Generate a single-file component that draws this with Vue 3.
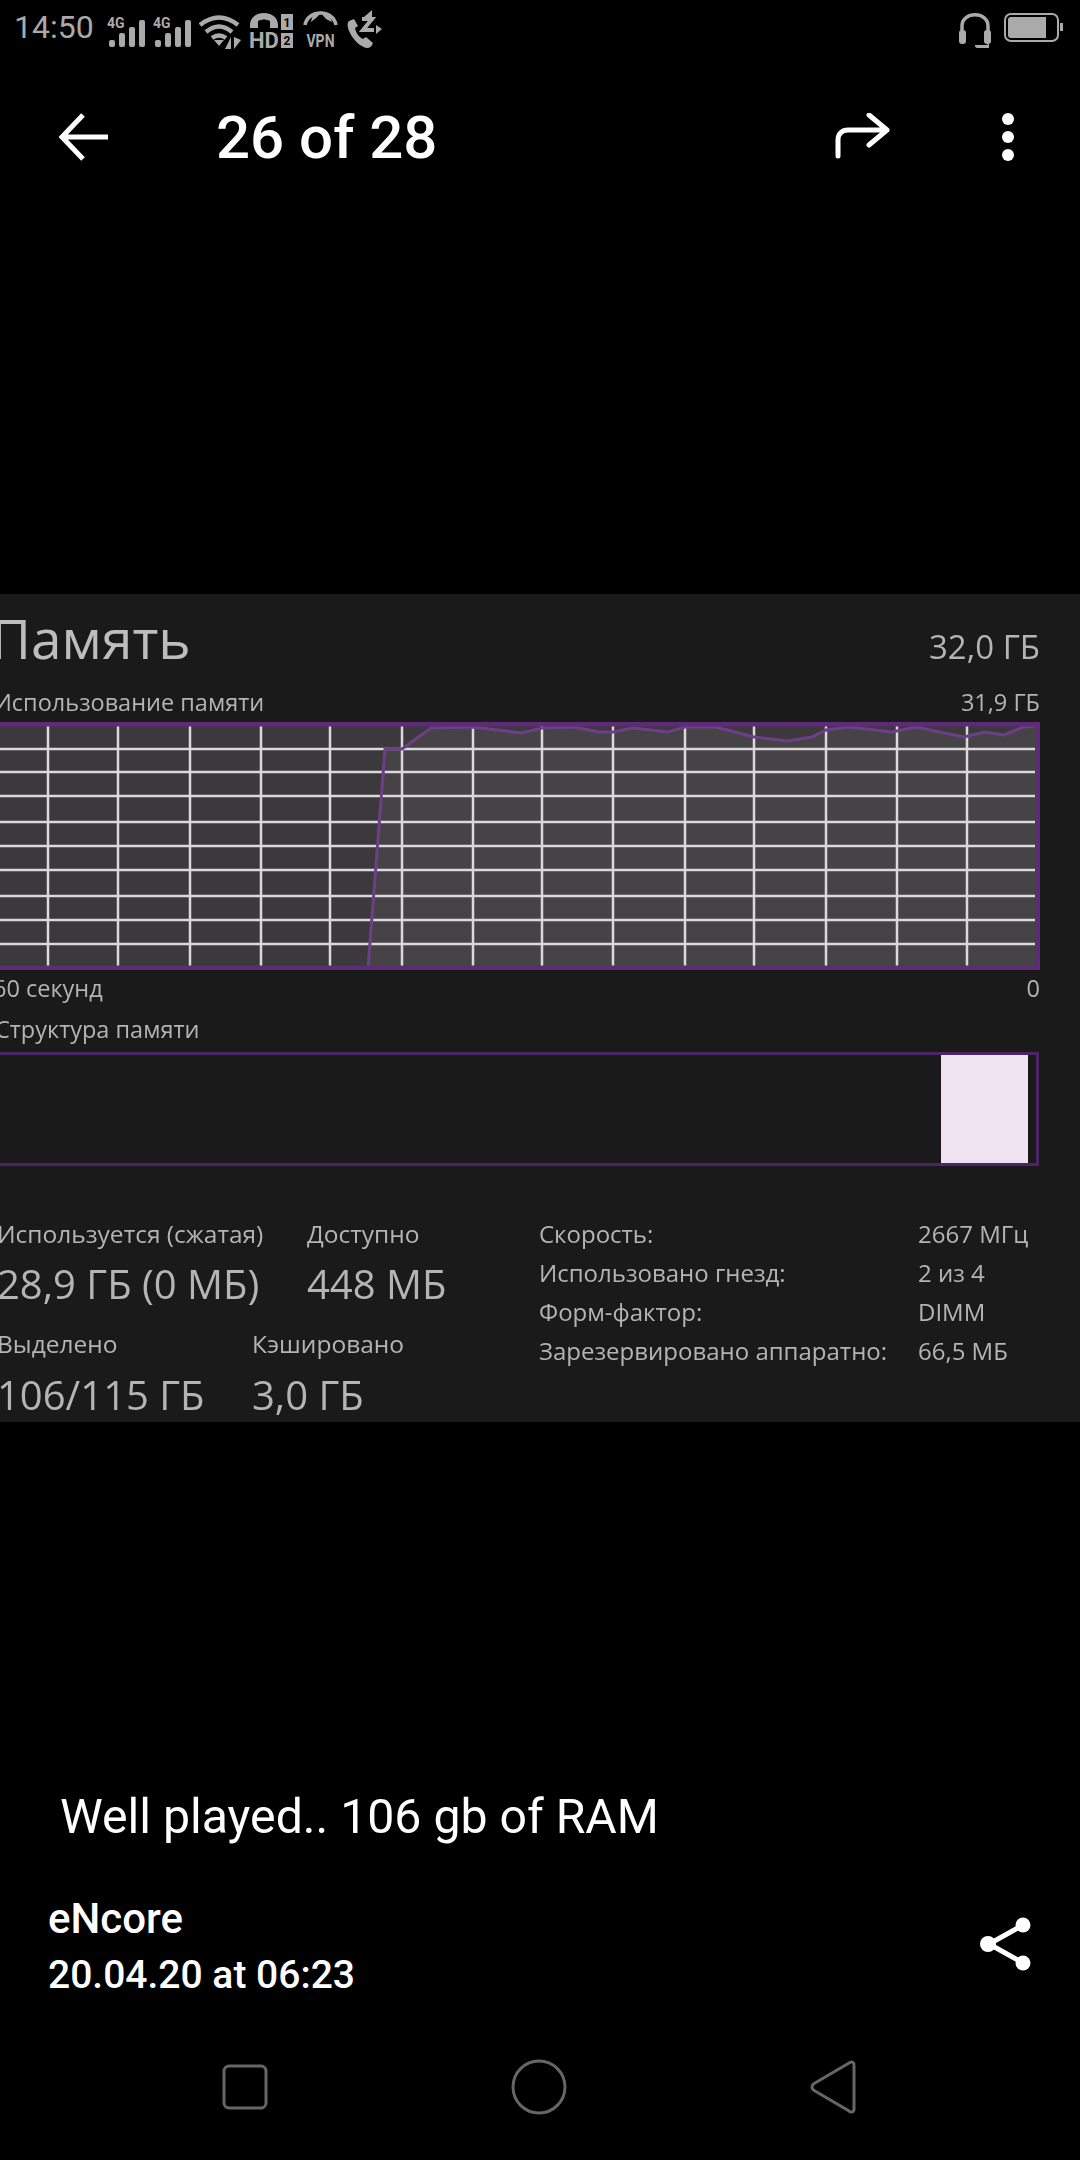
<template>
  <div class="screen">
    <!-- status bar -->
    <header class="status">
      <span class="status__time">14:50</span>
      <svg v-for="n in 2" :key="n" class="status__signal" width="42" height="42" viewBox="0 0 42 42">
        <text x="0" y="21" class="tiny">4G</text>
        <rect x="2" y="33" width="6" height="7" rx="2" />
        <rect x="12" y="26" width="6" height="14" rx="2" />
        <rect x="22" y="20" width="6" height="20" rx="2" />
        <rect x="32" y="13" width="6" height="27" rx="2" />
      </svg>
      <svg width="44" height="42" viewBox="0 0 44 42" class="status__wifi">
        <path d="M1 18 Q20 3 39 18" />
        <path d="M7 25 Q20 14 33 25" />
        <path d="M13 31 Q20 26 27 31" />
        <polygon class="solid" points="15,33 25,33 20,39" />
        <polygon class="solid" points="32,30 32,42 26,42" />
        <polygon class="solid" points="35,30 35,42 42,33" />
      </svg>
      <svg width="46" height="46" viewBox="0 0 46 46" class="status__hd">
        <path class="solid" d="M1 20 C1 4 29 4 29 20 L29 23 L21 23 L21 16 C16 14 14 14 9 16 L9 23 L1 23 Z" />
        <text x="0" y="43" class="hd">HD</text>
        <rect class="solid" x="32" y="9" width="12" height="16" />
        <rect class="solid" x="32" y="28" width="12" height="15" />
        <text x="38" y="22" class="sim">1</text>
        <text x="38" y="40" class="sim">2</text>
      </svg>
      <svg width="36" height="46" viewBox="0 0 36 46" class="status__vpn">
        <path class="solid" d="M8 17 C10 3 26 3 29 17 L23 14 L18 8 L13 13 Z" />
        <path class="thin" d="M2 20 C5 4 30 4 33 20" />
        <text class="vpn" transform="translate(17.5 42) scale(1 1.35)">VPN</text>
      </svg>
      <svg width="38" height="42" viewBox="0 0 38 42" class="status__call">
        <path class="solid" d="M4 14 C2 16 2 20 5 26 C9 34 16 40 22 41 C25 41 27 39 28 36 L21 30 L18 32 C14 30 11 26 10 21 L13 19 L9 12 Z" />
        <path class="zed" d="M17 12 H27 L18 23 H29" />
        <path class="solid" d="M19 10 L27 10 L27 3 Z" />
        <path class="solid" d="M31 18 L37 22 L31 27 Z" />
      </svg>

      <span class="status__spacer"></span>

      <svg width="34" height="42" viewBox="0 0 34 42" class="status__headset">
        <path class="thin" d="M4 25 V19 C4 4 30 4 30 19 V25" />
        <rect class="solid" x="1" y="23" width="7" height="14" rx="3" />
        <rect class="solid" x="26" y="23" width="7" height="14" rx="3" />
        <path class="solid" d="M17 38 H28 C30 38 31 36 31 35 V41 H19 C17 41 17 38 17 38 Z" />
      </svg>
      <div class="battery">
        <div class="battery__fill"></div>
      </div>
      <div class="battery__nub"></div>
    </header>

    <!-- toolbar -->
    <nav class="toolbar">
      <svg class="toolbar__back" width="50" height="50" viewBox="0 0 50 50">
        <path d="M49 25 H4 M24 3 L3 25 L24 47" />
      </svg>
      <span class="toolbar__title">26 of 28</span>
      <span class="toolbar__spacer"></span>
      <svg class="toolbar__forward" width="56" height="48" viewBox="0 0 56 48">
        <path d="M3 43 V27 C3 21 7 17 13 17 H52 M34 2 L52 17 L34 32" />
      </svg>
      <div class="toolbar__dots">
        <i></i><i></i><i></i>
      </div>
    </nav>

    <!-- photographed task manager panel -->
    <section class="shot">
      <div class="shot__row shot__row--head">
        <span class="shot__title">Память</span>
        <span class="shot__total">32,0 ГБ</span>
      </div>
      <div class="shot__row shot__row--label">
        <span>Использование памяти</span>
        <span>31,9 ГБ</span>
      </div>

      <svg class="chart" width="1040" height="248" viewBox="0 0 1040 248">
        <rect x="0" y="0" width="1040" height="248" class="chart__bg" />
        <polygon :points="areaPoints" class="chart__area" />
        <line
          v-for="y in rows"
          :key="'r' + y"
          x1="0"
          x2="1035"
          :y1="y"
          :y2="y"
          class="chart__grid"
        />
        <line
          v-for="x in cols"
          :key="'c' + x"
          :x1="x"
          :x2="x"
          y1="3"
          y2="244"
          class="chart__grid"
        />
        <polyline :points="linePoints" class="chart__line" />
        <path d="M0 2 H1038 V246 H0" class="chart__frame" />
      </svg>

      <div class="shot__row shot__row--axis">
        <span>60 секунд</span>
        <span>0</span>
      </div>
      <div class="shot__row shot__row--struct">
        <span>Структура памяти</span>
      </div>

      <div class="bar">
        <div class="bar__used"></div>
      </div>

      <div class="stats">
        <div class="stats__left">
          <div class="stats__row">
            <div class="stat stat--used">
              <div class="stat__label">Используется (сжатая)</div>
              <div class="stat__value">28,9 ГБ (0 МБ)</div>
            </div>
            <div class="stat">
              <div class="stat__label">Доступно</div>
              <div class="stat__value">448 МБ</div>
            </div>
          </div>
          <div class="stats__row">
            <div class="stat stat--alloc">
              <div class="stat__label">Выделено</div>
              <div class="stat__value">106/115 ГБ</div>
            </div>
            <div class="stat">
              <div class="stat__label">Кэшировано</div>
              <div class="stat__value">3,0 ГБ</div>
            </div>
          </div>
        </div>
        <dl class="specs">
          <template v-for="s in specs" :key="s.name">
            <dt>{{ s.name }}</dt>
            <dd>{{ s.value }}</dd>
          </template>
        </dl>
      </div>
    </section>

    <p class="caption">Well played.. 106 gb of RAM</p>

    <footer class="meta">
      <div class="meta__text">
        <div class="meta__author">eNcore</div>
        <div class="meta__date">20.04.20 at 06:23</div>
      </div>
      <svg class="meta__share" width="54" height="56" viewBox="0 0 54 56">
        <path d="M44 9 L10 28 L44 47" />
        <circle cx="44" cy="9" r="7.5" />
        <circle cx="9" cy="28" r="8" />
        <circle cx="44" cy="47" r="7.5" />
      </svg>
    </footer>

    <!-- android navigation -->
    <div class="navbar">
      <svg width="46" height="48" viewBox="0 0 46 48">
        <rect x="2" y="3" width="42" height="42" rx="5" />
      </svg>
      <svg width="56" height="56" viewBox="0 0 56 56">
        <circle cx="28" cy="28" r="26" />
      </svg>
      <svg width="48" height="54" viewBox="0 0 48 54">
        <path d="M44 5 C44 2 41 1 39 3 L5 23 C1 25 1 29 5 31 L39 51 C41 53 44 52 44 49 Z" />
      </svg>
    </div>
  </div>
</template>

<script setup>
// y positions of the horizontal grid lines, relative to the chart top
const rows = [27, 50, 74, 100, 124, 148, 174, 198, 222]
const cols = [48, 118, 190, 261, 330, 402, 473, 542, 613, 685, 754, 826, 897, 967]

const curve = [
  [368, 246], [385, 27], [402, 27], [431, 6], [473, 5], [521, 11], [542, 6],
  [574, 5], [599, 10], [613, 10], [633, 6], [668, 10], [685, 5], [716, 5],
  [754, 15], [788, 19], [812, 15], [826, 8], [850, 5], [892, 10], [916, 5],
  [964, 15], [985, 10], [1004, 13], [1023, 5], [1036, 4],
]

const linePoints = curve.map((p) => p.join(',')).join(' ')
const areaPoints = linePoints + ' 1036,246'

const specs = [
  { name: 'Скорость:', value: '2667 МГц' },
  { name: 'Использовано гнезд:', value: '2 из 4' },
  { name: 'Форм-фактор:', value: 'DIMM' },
  { name: 'Зарезервировано аппаратно:', value: '66,5 МБ' },
]
</script>

<style>
html,
body {
  margin: 0;
  background: #000;
}
</style>

<style scoped>
.screen {
  width: 1080px;
  height: 2160px;
  overflow: hidden;
  background: #000;
  display: flex;
  flex-direction: column;
  font-family: Roboto, "Noto Sans", sans-serif;
  color: #fff;
}

/* status bar */
.status {
  height: 54px;
  display: flex;
  align-items: center;
  padding: 0 14px;
  box-sizing: border-box;
  gap: 4px;
  color: #aaa;
}
.status svg {
  flex: none;
  fill: #aaa;
  margin-top: 2px;
}
.status__time {
  font-size: 32px;
  line-height: 54px;
  margin-right: 9px;
}
.status__wifi path {
  fill: none;
  stroke: #aaa;
  stroke-width: 4.5;
}
.status__hd {
  margin-left: 2px;
  margin-right: 4px;
}
.status__call {
  margin-left: 2px;
}
.status__spacer {
  flex: 1;
}
.status__headset {
  margin-right: 8px;
}
.status .thin {
  fill: none;
  stroke: #aaa;
  stroke-width: 3.5;
}
.status .zed {
  fill: none;
  stroke: #aaa;
  stroke-width: 4;
}
.tiny {
  font: 700 14px Roboto, sans-serif;
}
.hd {
  font: 700 22px Roboto, sans-serif;
}
.sim {
  font: 700 12px Roboto, sans-serif;
  fill: #000;
  text-anchor: middle;
}
.vpn {
  font: 700 14px Roboto, sans-serif;
  text-anchor: middle;
}
.battery {
  width: 55px;
  height: 29px;
  box-sizing: border-box;
  border: 2px solid #aaa;
  border-radius: 7px;
  padding: 2px;
}
.battery__fill {
  width: 38px;
  height: 100%;
  background: #aaa;
  border-radius: 3px 0 0 3px;
}
.battery__nub {
  width: 3px;
  height: 8px;
  background: #aaa;
  margin-left: -3px;
  margin-right: 3px;
}

/* toolbar */
.toolbar {
  height: 166px;
  display: flex;
  align-items: center;
  padding: 0 0 0 59px;
}
.toolbar svg {
  flex: none;
  fill: none;
  stroke: #fff;
  stroke-width: 5;
}
.toolbar__back {
  margin-right: 107px;
}
.toolbar__title {
  font-size: 60px;
  font-weight: 500;
}
.toolbar__spacer {
  flex: 1;
}
.toolbar__forward {
  stroke-linecap: round;
  stroke-linejoin: round;
  margin-right: 111px;
}
.toolbar__dots {
  display: flex;
  flex-direction: column;
  gap: 6px;
  margin-right: 66px;
}
.toolbar__dots i {
  display: block;
  width: 12px;
  height: 12px;
  border-radius: 50%;
  background: #fff;
}

/* task manager shot */
.shot {
  margin-top: 374px;
  height: 828px;
  flex: none;
  box-sizing: border-box;
  background: #1a1a1a;
  overflow: hidden;
  font-family: "Open Sans", "Noto Sans", sans-serif;
  color: #b4b4b4;
  filter: blur(0.5px);
}
.shot__row {
  display: flex;
  justify-content: space-between;
  align-items: baseline;
  width: 1040px;
  white-space: nowrap;
}
.shot__row--head {
  height: 88px;
  line-height: 88px;
}
.shot__title {
  font-size: 55px;
  margin-left: -9px;
  color: #bdbdbd;
}
.shot__total {
  font-size: 33px;
}
.shot__row--label {
  height: 40px;
  line-height: 40px;
  font-size: 23.5px;
}
.shot__row--label span:first-child {
  margin-left: -6px;
}
.chart {
  display: block;
}
.chart__bg {
  fill: #3b393b;
}
.chart__area {
  fill: #454345;
}
.chart__grid {
  stroke: #dcd8dc;
  stroke-width: 2.5;
}
.chart__line {
  fill: none;
  stroke: #6d3f88;
  stroke-width: 3;
}
.chart__frame {
  fill: none;
  stroke: #5d2b78;
  stroke-width: 5;
}
.shot__row--axis {
  height: 36px;
  line-height: 36px;
  font-size: 23.5px;
}
.shot__row--axis span:first-child {
  margin-left: -7px;
}
.shot__row--struct {
  height: 46px;
  line-height: 46px;
  font-size: 23.5px;
}
.shot__row--struct span {
  margin-left: -5px;
}
.bar {
  width: 1039px;
  height: 114px;
  box-sizing: border-box;
  border: 3px solid #4e2468;
  border-left: none;
  padding-right: 8px;
  display: flex;
  justify-content: flex-end;
}
.bar__used {
  width: 87px;
  background: #efe3f0;
}
.stats {
  display: flex;
  margin-top: 52px;
}
.stats__left {
  width: 539px;
  flex: none;
}
.stats__row {
  display: flex;
  height: 108px;
}
.stats__row:first-child .stat__label {
  margin-top: -2px;
  margin-bottom: 2px;
}
.stats__row:last-child .stat__value {
  margin-top: 3px;
}
.stat--used {
  width: 307px;
  flex: none;
}
.stat--alloc {
  width: 252px;
  flex: none;
}
.stat__label {
  font-size: 24.5px;
  line-height: 36px;
  white-space: nowrap;
}
.stat--used .stat__label,
.stat--used .stat__value,
.stat--alloc .stat__label,
.stat--alloc .stat__value {
  margin-left: -3px;
}
.stat__value {
  font-size: 40px;
  line-height: 60px;
  white-space: nowrap;
}
.specs {
  margin: -4px 0 0;
  display: grid;
  grid-template-columns: 379px auto;
  grid-auto-rows: 39px;
  align-items: center;
  font-size: 24px;
}
.specs dt,
.specs dd {
  margin: 0;
  white-space: nowrap;
}

/* caption + footer */
.caption {
  margin: 365px 0 0;
  padding-left: 60px;
  font-size: 48.2px;
  line-height: 60px;
}
.meta {
  margin-top: 43px;
  padding: 0 47px 0 48px;
  display: flex;
  justify-content: space-between;
  align-items: center;
}
.meta__author {
  font-size: 42px;
  font-weight: 500;
  line-height: 58px;
}
.meta__date {
  font-size: 39px;
  font-weight: 500;
  line-height: 54px;
}
.meta__share {
  margin-bottom: 4px;
  fill: #fff;
}
.meta__share path {
  fill: none;
  stroke: #fff;
  stroke-width: 5;
}
.navbar {
  flex: 1;
  display: flex;
  justify-content: center;
  align-items: center;
  gap: 243px;
  padding-top: 12px;
}
.navbar svg {
  fill: none;
  stroke: #666;
  stroke-width: 3;
}
</style>
